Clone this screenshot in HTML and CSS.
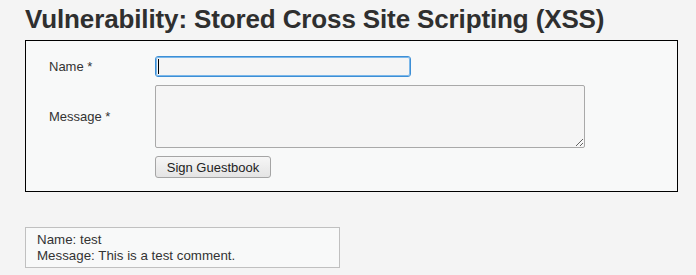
FILE: index.html
```html
<!DOCTYPE html>
<html lang="en">
<head>
    <meta charset="UTF-8">
    <title>Vulnerability: Stored Cross Site Scripting (XSS)</title>
    <link rel="stylesheet" href="styles.css">
</head>
<body>
    <div class="main-body">
        <h1 class="page-title">Vulnerability: Stored Cross Site Scripting (XSS)</h1>

        <div class="vulnerable-code-area">
            <form class="guestbook-form" name="guestform" method="post">
                <label class="form-label" for="txtName">Name *</label>
                <div class="caret-wrap">
                    <input class="txt-name" id="txtName" name="txtName" type="text" maxlength="10">
                </div>

                <label class="form-label" for="mtxMessage">Message *</label>
                <textarea class="mtx-message" id="mtxMessage" name="mtxMessage" cols="50" rows="3" maxlength="50"></textarea>

                <span></span>
                <div>
                    <button class="btn-sign" type="button" name="btnSign">Sign Guestbook</button>
                </div>
            </form>
        </div>

        <div class="guestbook-list">
            <div class="guestbook-entry">Name: test<br>Message: This is a test comment.</div>
        </div>
    </div>
</body>
</html>
```

FILE: styles.css
```css
html {
    background-color: #f4f4f4;
    color: #333333;
    font-family: "Liberation Sans", Arial, sans-serif;
    font-size: 13px;
}

body {
    margin: 0;
    padding: 0;
}

.main-body {
    width: 653px;
    margin-left: 25px;
}

.page-title {
    margin: 0;
    padding-top: 3px;
    height: 37px;
    font-size: 26px;
    line-height: 32px;
    font-weight: bold;
    color: #2f2f2f;
    letter-spacing: -0.13px;
}

.vulnerable-code-area {
    border: 1px solid #000000;
    background-color: #f8f9f9;
    padding: 15px 20px 13px 23px;
}

.guestbook-form {
    display: grid;
    grid-template-columns: 106px auto;
    row-gap: 8px;
    align-items: center;
}

.form-label {
    color: #333333;
    font-size: 13px;
}

.caret-wrap {
    position: relative;
    width: 256px;
    height: 21px;
}

.caret-wrap::after {
    content: "";
    position: absolute;
    left: 3px;
    top: 3px;
    width: 1px;
    height: 15px;
    background-color: #000000;
}

.txt-name {
    box-sizing: border-box;
    width: 256px;
    height: 21px;
    margin: 0;
    padding: 1px 2px;
    border: 1px solid #3d8fd6;
    border-radius: 3px;
    background-color: #f5f5f5;
    outline: 1px solid #7cb8ea;
    outline-offset: -2px;
    font-family: inherit;
    font-size: 13px;
}

.mtx-message {
    box-sizing: border-box;
    display: block;
    width: 430px;
    height: 63px;
    margin: 0;
    padding: 2px;
    border: 1px solid #a9a9a9;
    border-radius: 2px;
    background-color: #f5f5f5;
    font-family: inherit;
    font-size: 13px;
}

.btn-sign {
    box-sizing: border-box;
    width: 116px;
    height: 22px;
    margin: 0;
    padding: 0 6px;
    border: 1px solid #a5a5a5;
    border-radius: 3px;
    background: linear-gradient(#f6f6f6, #e4e4e4);
    color: #222222;
    font-family: inherit;
    font-size: 13px;
}

.guestbook-list {
    margin-top: 35px;
}

.guestbook-entry {
    box-sizing: border-box;
    width: 315px;
    border: 1px solid #c0c0c0;
    background-color: #f8f9f9;
    padding: 4px 11px 3px 11px;
    font-size: 13.33px;
    line-height: 16px;
    color: #333333;
}
```
